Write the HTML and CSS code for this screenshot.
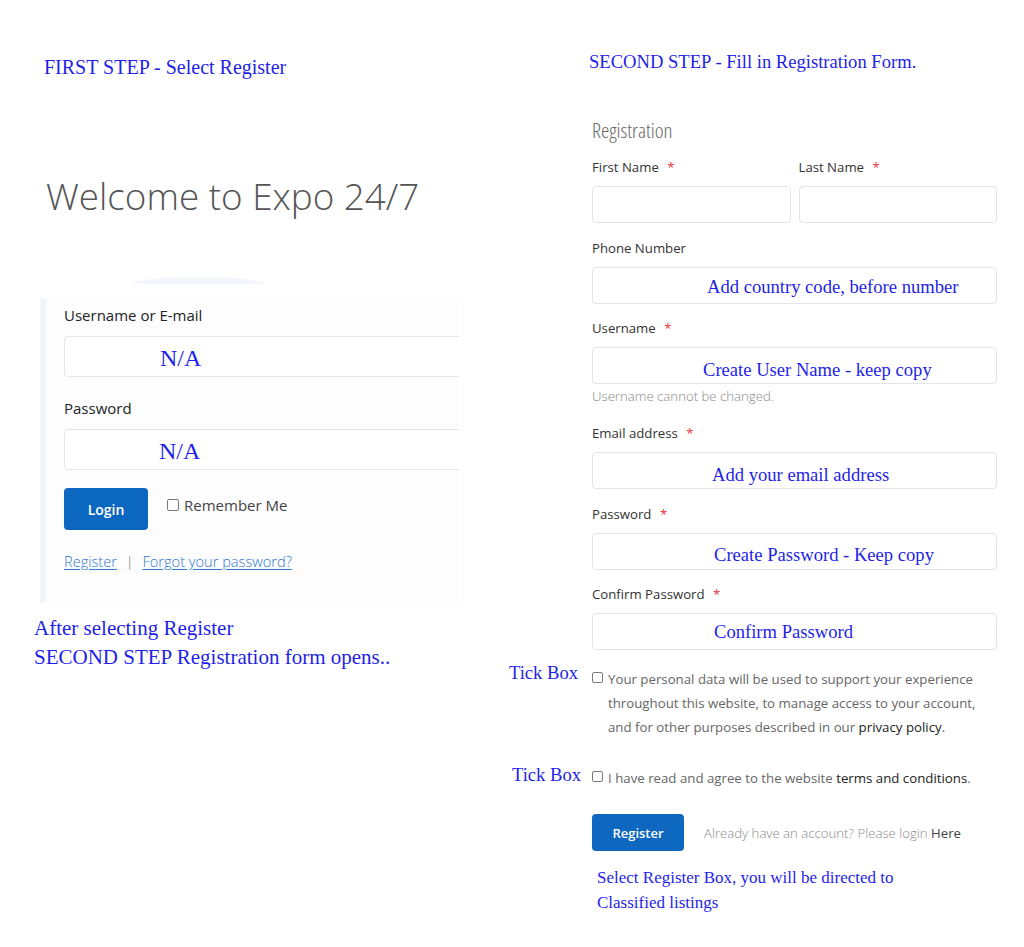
FILE: index.html
```html
<!DOCTYPE html>
<html lang="en">
<head>
    <meta charset="UTF-8">
    <meta name="viewport" content="width=device-width, initial-scale=1.0">
    <title>Expo 24/7 - How to register</title>
    <link rel="stylesheet" href="styles.css">
</head>
<body>

<div class="page">

    <!-- step one: the login screen -->
    <section class="col-left">
        <p class="note note-first">FIRST STEP - Select Register</p>

        <h1 class="welcome">Welcome to Expo 24/7</h1>
        <div class="arc"></div>

        <div class="login-panel">
            <div class="login-label">Username or E-mail</div>
            <div class="login-input"><span class="note na-user">N/A</span></div>

            <div class="login-label login-label-pass">Password</div>
            <div class="login-input"><span class="note na-pass">N/A</span></div>

            <div class="login-actions">
                <button class="btn btn-login">Login</button>
                <label class="remember"><input type="checkbox" class="check"> Remember Me</label>
            </div>

            <div class="login-links">
                <a href="#">Register</a>
                <span class="sep">|</span>
                <a href="#">Forgot your password?</a>
            </div>
        </div>

        <p class="note after-note">After selecting Register<br>SECOND STEP Registration form opens..</p>
    </section>

    <!-- step two: the registration form -->
    <section class="col-right">
        <div class="reg-grid">
            <p class="note note-second">SECOND STEP - Fill in Registration Form.</p>

            <h2 class="reg-title">Registration</h2>

            <div class="field">
                <div class="name-row">
                    <div>
                        <div class="field-label">First Name <span class="req">*</span></div>
                        <div class="field-input"></div>
                    </div>
                    <div>
                        <div class="field-label">Last Name <span class="req">*</span></div>
                        <div class="field-input"></div>
                    </div>
                </div>
            </div>

            <div class="field">
                <div class="field-label">Phone Number</div>
                <div class="field-input"><span class="note hint-phone">Add country code, before number</span></div>
            </div>

            <div class="field field-user">
                <div class="field-label">Username <span class="req">*</span></div>
                <div class="field-input"><span class="note hint-user">Create User Name - keep copy</span></div>
                <div class="field-help">Username cannot be changed.</div>
            </div>

            <div class="field">
                <div class="field-label">Email address <span class="req">*</span></div>
                <div class="field-input"><span class="note hint-email">Add your email address</span></div>
            </div>

            <div class="field">
                <div class="field-label">Password <span class="req">*</span></div>
                <div class="field-input"><span class="note hint-pass">Create Password - Keep copy</span></div>
            </div>

            <div class="field field-last">
                <div class="field-label">Confirm Password <span class="req">*</span></div>
                <div class="field-input"><span class="note hint-pass hint-confirm">Confirm Password</span></div>
            </div>

            <p class="note tick-note">Tick Box</p>
            <label class="tick tick-privacy">
                <input type="checkbox" class="check">
                <span class="tick-text">Your personal data will be used to support your experience throughout this website, to manage access to your account, and for other purposes described in our <b>privacy policy</b>.</span>
            </label>

            <p class="note tick-note tick-note-2">Tick Box</p>
            <label class="tick tick-terms">
                <input type="checkbox" class="check">
                <span class="tick-text">I have read and agree to the website <b>terms and conditions</b>.</span>
            </label>

            <div class="reg-actions">
                <button class="btn btn-register">Register</button>
                <span class="have-account">Already have an account? Please login <b>Here</b></span>
            </div>

            <p class="note end-note">Select Register Box, you will be directed to<br>Classified listings</p>
        </div>
    </section>

</div>

</body>
</html>
```

FILE: styles.css
```css
body {
    margin: 0;
    background-color: #fff;
    font-family: "Open Sans", Arial, sans-serif;
    color: #333;
}
a {
    color: inherit;
    text-decoration: none;
}
p {
    margin: 0;
}
.page {
    display: flex;
    align-items: flex-start;
}

/* blue hand-written style notes */
.note {
    font-family: "Liberation Serif", "Times New Roman", serif;
    color: #1f1fe8;
    font-size: 18.6px;
    line-height: 22px;
}

/* ---------- left column ---------- */
.col-left {
    width: 459px;
    flex-shrink: 0;
    overflow: hidden;
    padding-top: 55px;
    padding-bottom: 20px;
}
.note-first {
    margin-left: 44px;
    font-size: 20px;
    line-height: 24px;
}
.welcome {
    margin: 93px 0 0 46px;
    font-size: 36.8px;
    line-height: 48px;
    font-weight: 300;
    color: #555;
    white-space: nowrap;
}
.arc {
    margin: 57px 0 0 132px;
    width: 132px;
    height: 7px;
    border-radius: 50% 50% 0 0 / 100% 100% 0 0;
    background-color: #f3f6fb;
}
.login-panel {
    margin: 14px 0 0 40px;
    border-left: 6px solid #f2f6fc;
    padding: 6px 0 31px 18px;
    background-color: #fdfdfe;
}
.login-label {
    font-size: 15px;
    line-height: 22px;
    color: #222;
}
.login-label-pass {
    margin-top: 20px;
}
.login-input {
    margin-top: 10px;
    width: 440px;
    height: 39px;
    border: 1px solid #e6e6e6;
    border-radius: 4px;
    background-color: #fff;
    display: flex;
    align-items: center;
}
.login-input .note {
    font-size: 24px;
    line-height: 28px;
    padding-top: 3px;
}
.na-user {
    margin-left: 95px;
}
.na-pass {
    margin-left: 94px;
}
.login-actions {
    margin-top: 18px;
    display: flex;
    align-items: center;
}
.btn {
    border: none;
    border-radius: 4px;
    background-color: #0c67c1;
    color: #fff;
    font-family: "Open Sans", Arial, sans-serif;
    font-weight: 600;
    cursor: pointer;
}
.btn-login {
    width: 84px;
    height: 42px;
    font-size: 14px;
}
.remember {
    margin-left: 19px;
    margin-top: -8px;
    display: flex;
    align-items: center;
    font-size: 15px;
    color: #444;
}
.check {
    appearance: none;
    -webkit-appearance: none;
    width: 11px;
    height: 11px;
    margin: 0 5px 0 0;
    border: 1px solid #7a7a7a;
    border-radius: 2px;
    background-color: #fff;
    flex-shrink: 0;
}
.remember .check {
    width: 12px;
    height: 12px;
}
.login-links {
    margin-top: 20px;
    font-size: 14.6px;
    line-height: 22px;
    font-weight: 300;
}
.login-links a {
    color: #2f78cf;
    text-decoration: underline;
    text-underline-offset: 2px;
}
.sep {
    color: #777;
    margin: 0 5px;
}
.after-note {
    margin: 11px 0 0 34px;
    font-size: 21px;
    line-height: 29px;
}

/* ---------- right column ---------- */
.col-right {
    flex: 1;
    padding: 51px 0 30px 49px;
}
.reg-grid {
    display: grid;
    grid-template-columns: 84px 405px;
}
.reg-grid > * {
    grid-column: 2;
}
.note-second {
    margin-left: -3px;
}
.reg-title {
    margin: 44px 0 0;
    font-size: 21px;
    line-height: 26px;
    font-weight: 300;
    font-stretch: 75%;
    color: #666;
}
.field {
    margin-top: 14.5px;
}
.reg-title + .field {
    margin-top: 14px;
}
.field-user + .field {
    margin-top: 17px;
}
.name-row {
    display: grid;
    grid-template-columns: 1fr 1fr;
    gap: 8px;
}
.field-label {
    font-size: 13.2px;
    line-height: 20px;
    color: #333;
    margin-bottom: 9px;
}
.req {
    color: #e8343c;
    margin-left: 5px;
}
.field-input {
    height: 35px;
    border: 1px solid #e4e4e4;
    border-radius: 4px;
    background-color: #fff;
    display: flex;
    align-items: center;
}
.field-input .note {
    padding-top: 8px;
}
.field-input .hint-phone {
    margin-left: 114px;
    padding-top: 3px;
}
.hint-user {
    margin-left: 110px;
}
.hint-email {
    margin-left: 119px;
}
.hint-pass {
    margin-left: 121px;
}
.field-input .hint-confirm {
    padding-top: 1px;
}
.field-help {
    margin-top: 2px;
    font-size: 13.2px;
    line-height: 20px;
    font-weight: 300;
    color: #888;
}
.tick-note {
    grid-column: 1;
    margin: 11px 0 0 1px;
    line-height: 24px;
    white-space: nowrap;
}
.tick-note-2 {
    margin: 24px 0 0 4px;
}
.tick {
    display: flex;
    align-items: flex-start;
    font-size: 13.25px;
    line-height: 24px;
    color: #666;
}
.tick .check {
    margin-top: 5px;
}
.tick-text b {
    font-weight: 400;
    color: #222;
}
.tick-privacy {
    margin-top: 17px;
}
.tick-terms {
    margin-top: 27px;
}
.reg-actions {
    margin-top: 24px;
    display: flex;
    align-items: center;
}
.btn-register {
    width: 92px;
    height: 37px;
    font-size: 13px;
    background-color: #0f68bf;
}
.have-account {
    margin-left: 20px;
    font-size: 13.2px;
    font-weight: 300;
    color: #8a8a8a;
}
.have-account b {
    color: #444;
    font-weight: 400;
}
.end-note {
    margin: 14px 0 0 5px;
    font-size: 17px;
    line-height: 25px;
}
```
